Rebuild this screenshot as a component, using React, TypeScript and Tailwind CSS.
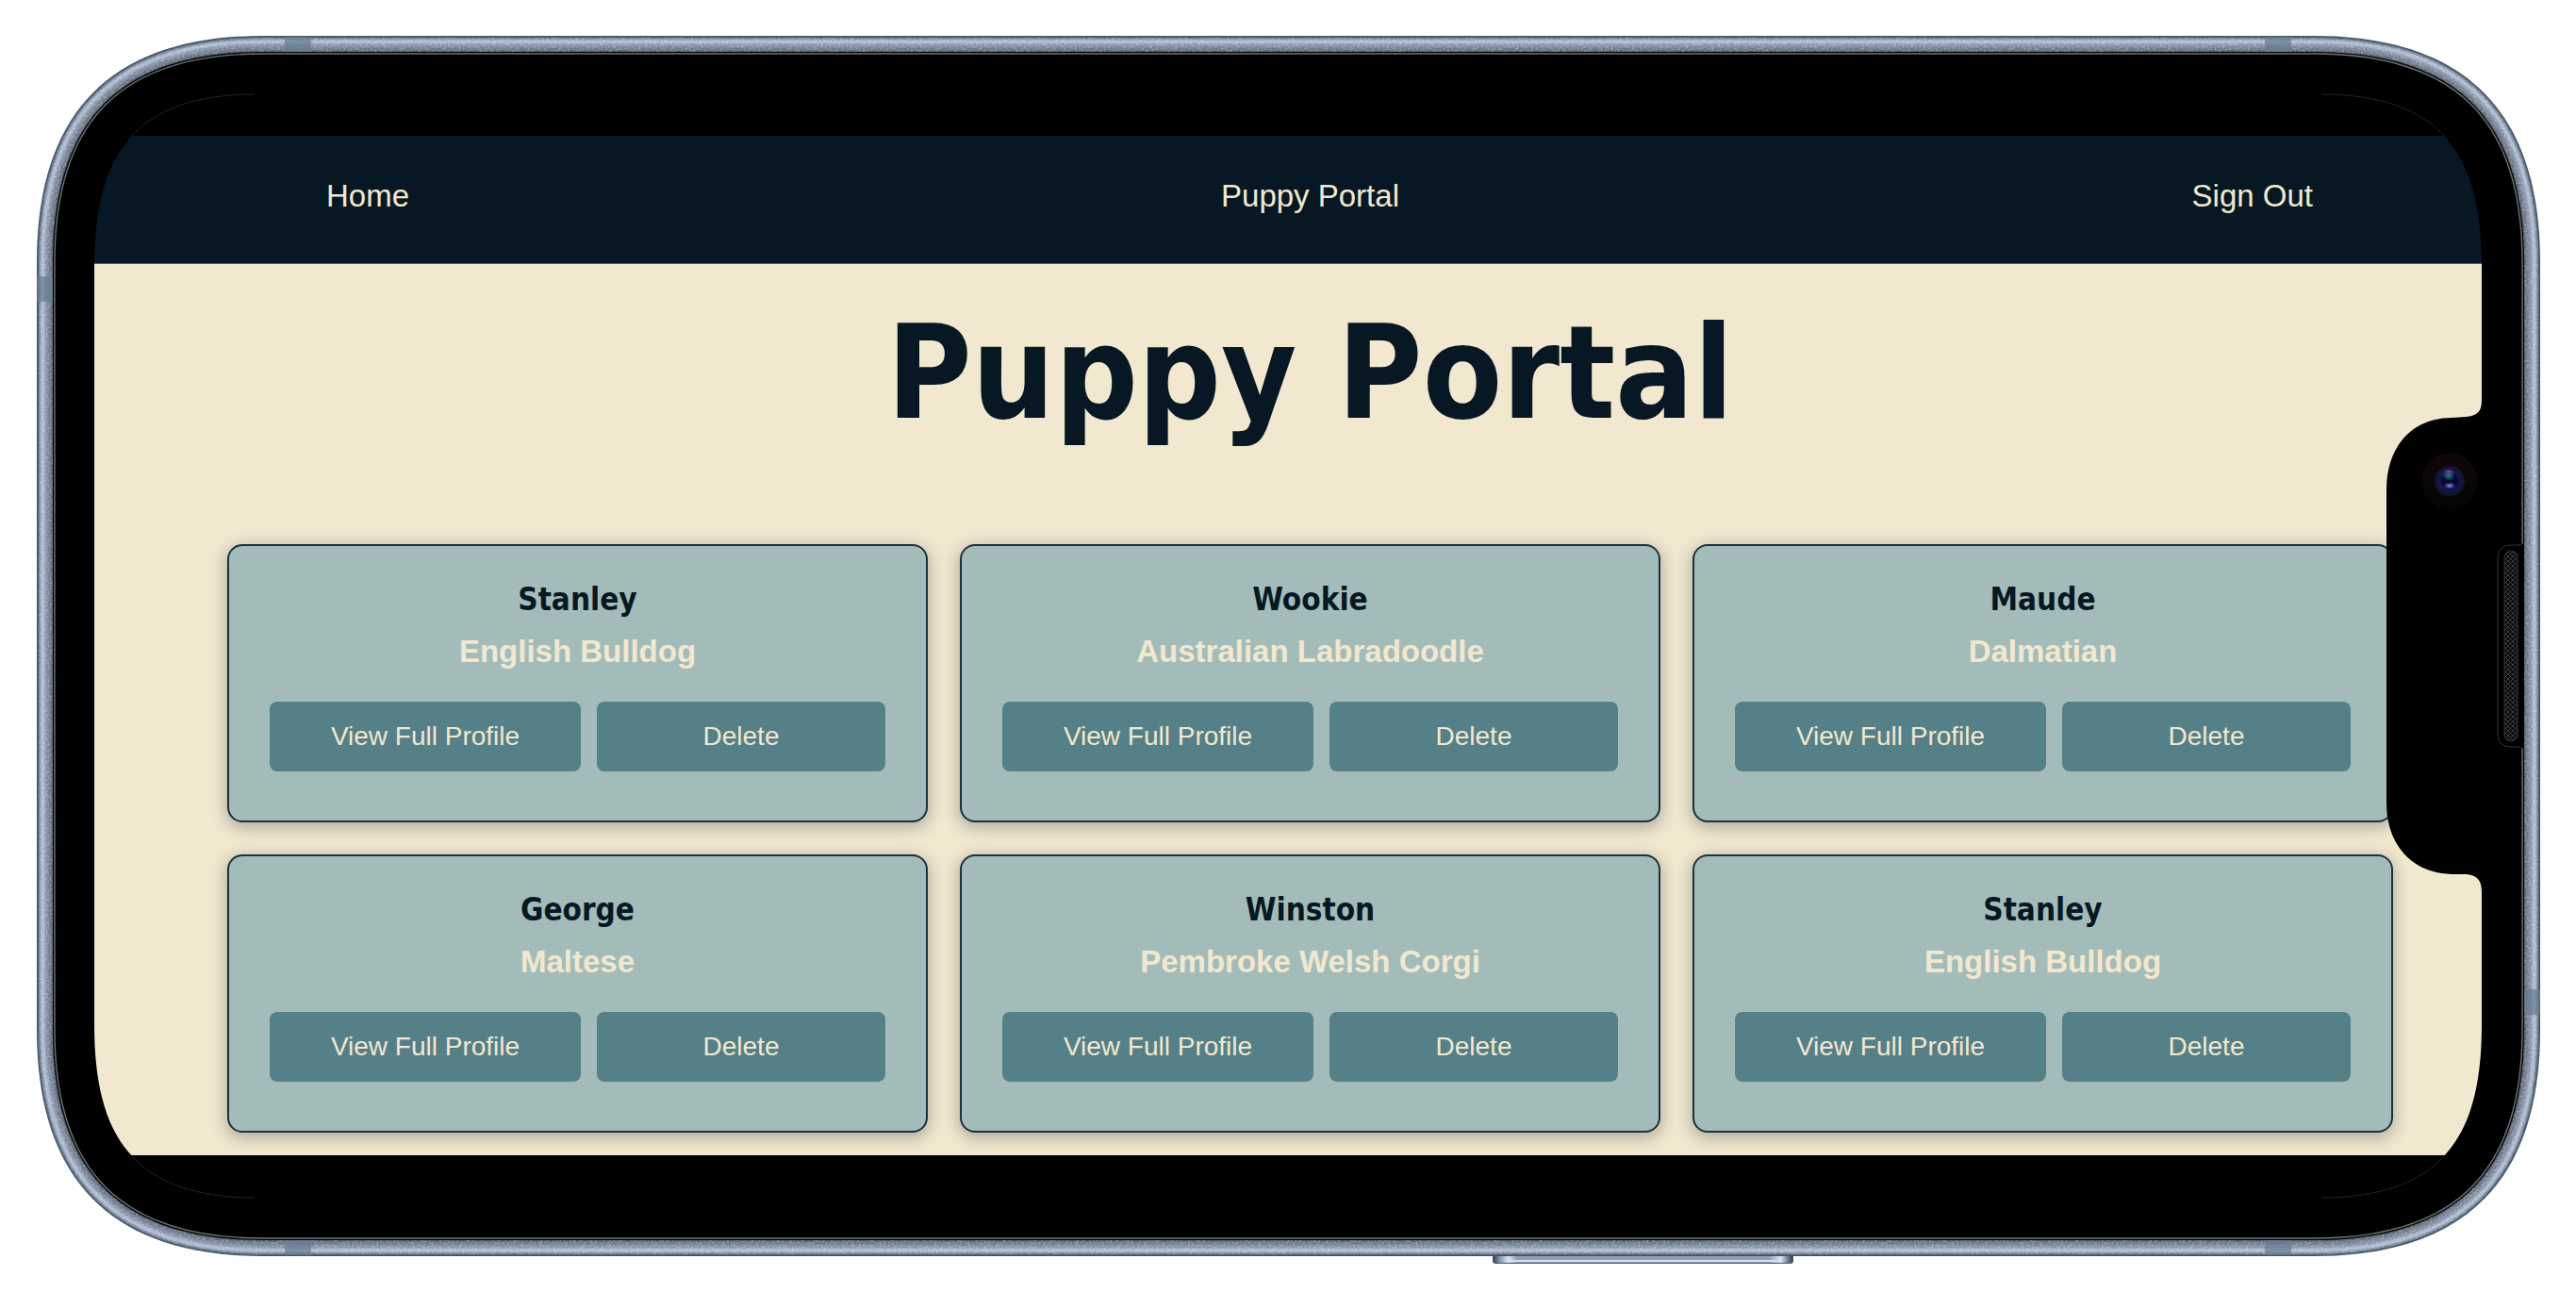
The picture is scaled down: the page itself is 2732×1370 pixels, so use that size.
type Puppy = { id: number; name: string; breed: string };

const puppies: Puppy[] = [
  { id: 1, name: "Stanley", breed: "English Bulldog" },
  { id: 2, name: "Wookie", breed: "Australian Labradoodle" },
  { id: 3, name: "Maude", breed: "Dalmatian" },
  { id: 4, name: "George", breed: "Maltese" },
  { id: 5, name: "Winston", breed: "Pembroke Welsh Corgi" },
  { id: 6, name: "Stanley", breed: "English Bulldog" },
];

/* Rounded outline with continuous-curvature corners: r is the corner's reach, c its handle. */
function outline(x0: number, y0: number, x1: number, y1: number, r: number, c: number) {
  return [
    `M${x0} ${y0 + r}`,
    `C${x0} ${y0 + c} ${x0 + c} ${y0} ${x0 + r} ${y0}`,
    `H${x1 - r}`,
    `C${x1 - c} ${y0} ${x1} ${y0 + c} ${x1} ${y0 + r}`,
    `V${y1 - r}`,
    `C${x1} ${y1 - c} ${x1 - c} ${y1} ${x1 - r} ${y1}`,
    `H${x0 + r}`,
    `C${x0 + c} ${y1} ${x0} ${y1 - c} ${x0} ${y1 - r}`,
    "Z",
  ].join(" ");
}

const body = (inset: number) =>
  outline(39 + inset, 38 + inset, 2694 - inset, 1332 - inset, 240 - inset, 80 - inset / 2);

const screen = outline(100, 100, 2632, 1270, 184, 51);

/* Metal band, from the outer edge inwards. */
const metal: [number, string][] = [
  [0, "#455463"],
  [1, "#556577"],
  [2, "#68788c"],
  [3, "#8393a8"],
  [4, "#9aaabf"],
  [5, "#adbbd0"],
  [7, "#a6b4c8"],
  [8, "#96a4b8"],
  [9, "#8794a8"],
  [11, "#788597"],
  [13, "#6b7889"],
  [15, "#5f6d7f"],
  [16, "#4a586a"],
];

const bands: [number, number, number, number][] = [
  [302, 39, 28, 17],
  [2402, 39, 28, 17],
  [302, 1315, 28, 16],
  [2402, 1315, 28, 16],
  [39, 293, 17, 27],
  [2677, 1049, 17, 27],
];

function PhoneFrame() {
  return (
    <svg
      aria-hidden="true"
      viewBox="0 0 2732 1370"
      preserveAspectRatio="none"
      className="pointer-events-none absolute inset-0 h-full w-full"
    >
      <defs>
        <filter id="grain" x="0" y="0" width="100%" height="100%">
          <feTurbulence type="fractalNoise" baseFrequency="0.45" numOctaves="2" seed="4" />
          <feColorMatrix values="0 0 0 0 1  0 0 0 0 1  0 0 0 0 1  1.6 0 0 0 -0.65" />
        </filter>
        <clipPath id="ring">
          <path clipRule="evenodd" d={`${body(2)} ${body(17)}`} />
        </clipPath>
        <mask id="aroundScreen">
          <rect width="2732" height="1370" fill="white" />
          <path d={screen} fill="black" />
          <rect x="90" y="90" width="2552" height="54" fill="white" />
          <rect x="90" y="1225" width="2552" height="54" fill="white" />
        </mask>
        <linearGradient id="sideButton" x1="0" x2="1">
          <stop offset="0" stopColor="#34414f" />
          <stop offset="0.02" stopColor="#8393a8" />
          <stop offset="0.05" stopColor="#dde7f5" />
          <stop offset="0.08" stopColor="#8e9db4" />
          <stop offset="0.92" stopColor="#8e9db4" />
          <stop offset="0.96" stopColor="#dde7f5" />
          <stop offset="0.98" stopColor="#8393a8" />
          <stop offset="1" stopColor="#34414f" />
        </linearGradient>
        <linearGradient id="lensHalo" x1="0" y1="0" x2="0" y2="1">
          <stop offset="0" stopColor="#0e060c" />
          <stop offset="1" stopColor="#050505" />
        </linearGradient>
        <radialGradient id="lens">
          <stop offset="0" stopColor="#05061c" />
          <stop offset="0.65" stopColor="#07082c" />
          <stop offset="0.88" stopColor="#10156a" />
          <stop offset="1" stopColor="#131838" />
        </radialGradient>
        <radialGradient id="teal">
          <stop offset="0" stopColor="#1d8a86" />
          <stop offset="1" stopColor="#1d8a86" stopOpacity="0" />
        </radialGradient>
        <radialGradient id="violet">
          <stop offset="0" stopColor="#a33fc4" />
          <stop offset="1" stopColor="#6a2aa0" stopOpacity="0" />
        </radialGradient>
        <radialGradient id="glint">
          <stop offset="0" stopColor="#9aa6f0" />
          <stop offset="1" stopColor="#4450c0" stopOpacity="0" />
        </radialGradient>
        <pattern id="mesh" width="5" height="5" patternUnits="userSpaceOnUse">
          <rect width="5" height="5" fill="#0a0a0a" />
          <path d="M0 0L5 5M5 0L0 5" stroke="#444" strokeWidth="0.9" />
        </pattern>
      </defs>

      <rect x="1583" y="1326" width="319" height="14" rx="3" fill="#4a5868" />
      <rect x="1584" y="1328" width="317" height="11" rx="3" fill="url(#sideButton)" />
      <rect x="1600" y="1336" width="285" height="2" fill="#d5e0f0" />

      <g mask="url(#aroundScreen)">
        {metal.map(([inset, color]) => (
          <path key={inset} d={body(inset)} fill={color} />
        ))}
        <g clipPath="url(#ring)">
          <rect x="30" y="30" width="2672" height="1310" filter="url(#grain)" opacity="0.5" />
        </g>
        {bands.map(([x, y, w, h]) => (
          <rect key={`${x}-${y}`} x={x} y={y} width={w} height={h} fill="#667a8f" opacity="0.7" />
        ))}
        <path d={body(17)} fill="#05080c" />
        <path d={body(19)} fill="#000" stroke="#75706c" strokeWidth="1.4" />
      </g>

      <path
        d="M140 144C168 113 215 100 270 100M2592 144C2564 113 2517 100 2462 100M140 1226C168 1257 215 1270 270 1270M2592 1226C2564 1257 2517 1270 2462 1270"
        fill="none"
        stroke="#3a3a3a"
        strokeWidth="0.6"
      />

      <path
        d="M2634 424H2632C2632 437 2627 441 2615 442L2600 443C2558 443 2531 474 2531 519V851C2531 896 2558 926 2600 927H2615C2627 928 2632 933 2632 946H2634Z"
        fill="#000"
      />

      <circle cx="2598" cy="510" r="30" fill="url(#lensHalo)" />
      <circle cx="2598" cy="510" r="16" fill="#14162b" />
      <circle cx="2598" cy="510" r="12" fill="url(#lens)" />
      <ellipse cx="2597" cy="504" rx="7" ry="6" fill="url(#teal)" />
      <ellipse cx="2597" cy="500" rx="6" ry="3" fill="url(#violet)" />
      <ellipse cx="2598" cy="515" rx="7" ry="4" fill="url(#glint)" />

      <path d="M2672 577H2676V793H2672Z" fill="#000" />
      <path
        d="M2675 575Q2675 578 2671 578H2663Q2649 578 2649 592V778Q2649 792 2663 792H2671Q2675 792 2675 795"
        fill="#000"
        stroke="#333"
      />
      <rect x="2656" y="584" width="14" height="202" rx="7" fill="url(#mesh)" stroke="#333" />
    </svg>
  );
}

function PuppyCard({ puppy }: { puppy: Puppy }) {
  return (
    <li className="flex flex-col rounded-2xl border-2 border-[#1c2f3d] bg-[#a4bcb9] px-[43px] pt-9 pb-13 text-center shadow-[0_4px_16px_2px_rgba(7,24,36,0.28)]">
      <h2 className="font-['DejaVu_Sans_Condensed','DejaVu_Sans',sans-serif] text-[33px] leading-[42px] font-bold text-[#071824]">
        {puppy.name}
      </h2>
      <p className="mt-3.5 text-[33px] leading-10 font-bold text-[#f2e8d0]">{puppy.breed}</p>
      <div className="mt-[33px] flex gap-[17px]">
        <button
          type="button"
          className="h-[74px] flex-[330_1_0%] rounded-lg bg-[#568087] text-[28px] text-[#f2e8d0]"
        >
          View Full Profile
        </button>
        <button
          type="button"
          className="h-[74px] flex-[306_1_0%] rounded-lg bg-[#568087] text-[28px] text-[#f2e8d0]"
        >
          Delete
        </button>
      </div>
    </li>
  );
}

export default function App() {
  return (
    <div className="relative bg-white px-[100px] pt-36 pb-[145px] font-['Liberation_Sans',Arial,sans-serif]">
      <div className="bg-[#f2e8d0] pb-6">
        <nav className="grid h-[136px] grid-cols-[1fr_auto_1fr] items-center border-b border-[#4f6265] bg-[#071824] pr-[179px] pb-2 pl-[226px] text-[33px] text-[#f2e8d0]">
          <a href="#home" className="ml-5 justify-self-start">
            Home
          </a>
          <a href="#portal">Puppy Portal</a>
          <a href="#signout" className="justify-self-end">
            Sign Out
          </a>
        </nav>
        <main className="pr-[94px] pl-[141px]">
          <h1 className="pt-9 text-center font-['DejaVu_Sans_Condensed','DejaVu_Sans',sans-serif] text-[137px] leading-[160px] font-bold text-[#071824]">
            Puppy Portal
          </h1>
          <ul className="mt-[101px] grid grid-cols-3 gap-[34px]">
            {puppies.map((puppy) => (
              <PuppyCard key={puppy.id} puppy={puppy} />
            ))}
          </ul>
        </main>
      </div>
      <PhoneFrame />
    </div>
  );
}
